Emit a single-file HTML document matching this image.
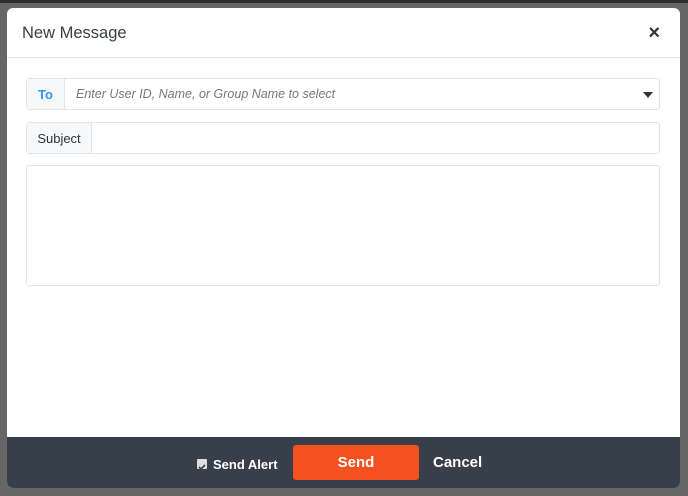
<!DOCTYPE html>
<html><head><meta charset="utf-8"><style>
*{box-sizing:border-box;margin:0;padding:0}
body{width:688px;height:496px;background:#666;position:relative;overflow:hidden;font-family:"Liberation Sans",sans-serif}
.top{position:absolute;left:0;top:0;width:688px;height:3px;background:#2e2e2e}
.modal{position:absolute;left:7px;top:8px;width:673px;height:480px;background:#fff;border-radius:6px;overflow:hidden}
.hdr{height:50px;border-bottom:1px solid #e5e5e5;position:relative}
.hdr h1{position:absolute;left:15px;top:16px;font-size:16.5px;font-weight:normal;color:#3a3f44}
.x{position:absolute;right:20px;top:14px;font-size:20px;font-weight:bold;color:#333}
.grp{position:absolute;left:19px;width:634px;height:32px;border:1px solid #e3e5e7;border-radius:3px;display:flex}
.lab{background:#f7f8f9;border-right:1px solid #e3e5e7;font-size:13px;display:flex;align-items:center;justify-content:center}
.ph{font-style:italic;color:#777;font-size:12.5px;padding-left:11px;display:flex;align-items:center;flex:1}
.caret{position:absolute;right:6px;top:13px;border-left:5px solid transparent;border-right:5px solid transparent;border-top:6px solid #333}
.ta{position:absolute;left:19px;top:157px;width:634px;height:121px;border:1px solid #e3e5e7;border-radius:3px}
.ftr{position:absolute;left:0;bottom:0;width:673px;height:51px;background:#37404a}
.chk{position:absolute;left:190px;top:22px;width:10px;height:10px;background:#ddd;border-radius:1px}
.sa{position:absolute;left:206px;top:20px;color:#fff;font-weight:bold;font-size:13px}
.send{position:absolute;left:286px;top:8px;width:126px;height:35px;background:#f5501f;border-radius:3px;color:#fff;font-weight:bold;font-size:15px;text-align:center;line-height:36px}
.cancel{position:absolute;left:426px;top:17px;color:#fff;font-weight:bold;font-size:15px}
</style></head><body>
<div class="top"></div>
<div class="modal">
<div class="hdr"><h1>New Message</h1><div class="x">×</div></div>
<div class="grp" style="top:70px"><div class="lab" style="width:38px;color:#2a9be0;font-weight:bold">To</div><div class="ph">Enter User ID, Name, or Group Name to select</div><div class="caret"></div></div>
<div class="grp" style="top:114px"><div class="lab" style="width:65px;color:#333">Subject</div></div>
<div class="ta"></div>
<div class="ftr"><div class="chk"><svg width="10" height="10" viewBox="0 0 10 10"><path d="M2 5l2 2 4-4" stroke="#37404a" stroke-width="1.6" fill="none"/></svg></div><div class="sa">Send Alert</div><div class="send">Send</div><div class="cancel">Cancel</div></div>
</div>
</body></html>
